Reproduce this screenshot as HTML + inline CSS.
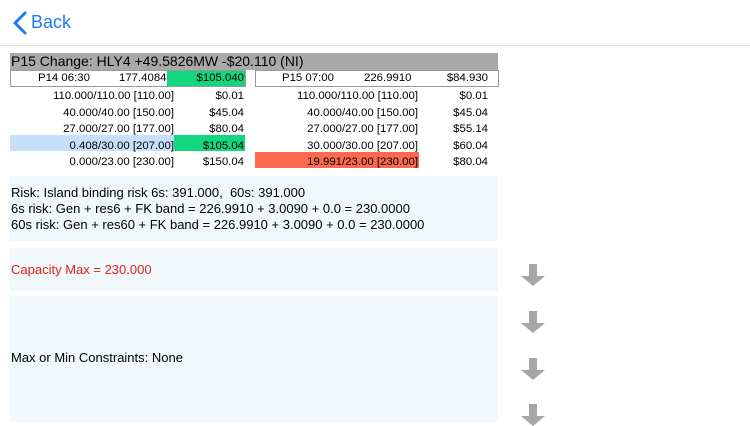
<!DOCTYPE html><html><head><style>
body{margin:0;width:750px;height:422px;background:#fff;font-family:"Liberation Sans",sans-serif;position:relative;overflow:hidden}
.a{position:absolute}
.t{font-size:11.4px;color:#000;white-space:nowrap}
.p{background:#f1f8fb;left:10px;width:488px}
.arr{position:absolute;left:521px;width:24px;height:22px}
</style></head><body>
<svg class="a" style="left:10px;top:10px" width="20" height="26"><path d="M15 3 L5 13 L15 23" stroke="#1a7cf5" stroke-width="3" fill="none" stroke-linecap="round" stroke-linejoin="round"/></svg>
<div class="a" style="left:31px;top:12px;font-size:18px;color:#1a7cf5">Back</div>
<div class="a" style="left:0;top:45px;width:750px;height:1px;background:#e0e0e0"></div>
<div class="a" style="left:10px;top:53px;width:488px;height:17px;background:#a9a9a9"></div>
<div class="a" style="left:11px;top:53px;font-size:14px;line-height:17px">P15 Change: HLY4 +49.5826MW -$20.110 (NI)</div>
<div class="a" style="left:10px;top:70px;width:234px;height:15px;border:1px solid #999"></div>
<div class="a" style="left:167px;top:71px;width:78px;height:15px;background:#14d67e"></div>
<div class="a" style="left:255px;top:70px;width:242px;height:15px;border:1px solid #999"></div>
<div class="a" style="left:10px;top:135px;width:164px;height:16px;background:#c6dffa"></div>
<div class="a" style="left:174px;top:135px;width:71px;height:16px;background:#14d67e"></div>
<div class="a" style="left:255px;top:152px;width:164px;height:16px;background:#fb6a4e"></div>
<div class="a t" style="left:38px;top:72px">P14 06:30</div>
<div class="a t" style="left:119px;top:72px">177.4084</div>
<div class="a t" style="right:506px;top:72px">$105.040</div>
<div class="a t" style="left:282px;top:72px">P15 07:00</div>
<div class="a t" style="left:364px;top:72px">226.9910</div>
<div class="a t" style="right:262px;top:72px">$84.930</div>
<div class="a t" style="right:576px;top:88px;text-align:right;line-height:16.5px">110.000/110.00 [110.00]<br>40.000/40.00 [150.00]<br>27.000/27.00 [177.00]<br>0.408/30.00 [207.00]<br>0.000/23.00 [230.00]</div>
<div class="a t" style="right:506px;top:88px;text-align:right;line-height:16.5px">$0.01<br>$45.04<br>$80.04<br>$105.04<br>$150.04</div>
<div class="a t" style="right:332px;top:88px;text-align:right;line-height:16.5px">110.000/110.00 [110.00]<br>40.000/40.00 [150.00]<br>27.000/27.00 [177.00]<br>30.000/30.00 [207.00]<br>19.991/23.00 [230.00]</div>
<div class="a t" style="right:262px;top:88px;text-align:right;line-height:16.5px">$0.01<br>$45.04<br>$55.14<br>$60.04<br>$80.04</div>
<div class="a p" style="top:176px;height:65px"></div>
<div class="a" style="left:11px;top:185px;font-size:13px;line-height:16px;white-space:nowrap">Risk: Island binding risk 6s: 391.000,&nbsp; 60s: 391.000<br>6s risk: Gen + res6 + FK band = 226.9910 + 3.0090 + 0.0 = 230.0000<br>60s risk: Gen + res60 + FK band = 226.9910 + 3.0090 + 0.0 = 230.0000</div>
<div class="a p" style="top:248px;height:43px"></div>
<div class="a" style="left:11px;top:262px;font-size:13px;color:#e0201a">Capacity Max = 230.000</div>
<div class="a p" style="top:296px;height:126px"></div>
<div class="a" style="left:11px;top:350px;font-size:13px">Max or Min Constraints: None</div>
<svg class="arr" style="top:264px"><path d="M8 0h8v12h8l-12 10l-12-10h8z" fill="#a6a6a6"/></svg>
<svg class="arr" style="top:311px"><path d="M8 0h8v12h8l-12 10l-12-10h8z" fill="#a6a6a6"/></svg>
<svg class="arr" style="top:358px"><path d="M8 0h8v12h8l-12 10l-12-10h8z" fill="#a6a6a6"/></svg>
<svg class="arr" style="top:404px"><path d="M8 0h8v12h8l-12 10l-12-10h8z" fill="#a6a6a6"/></svg>
</body></html>
